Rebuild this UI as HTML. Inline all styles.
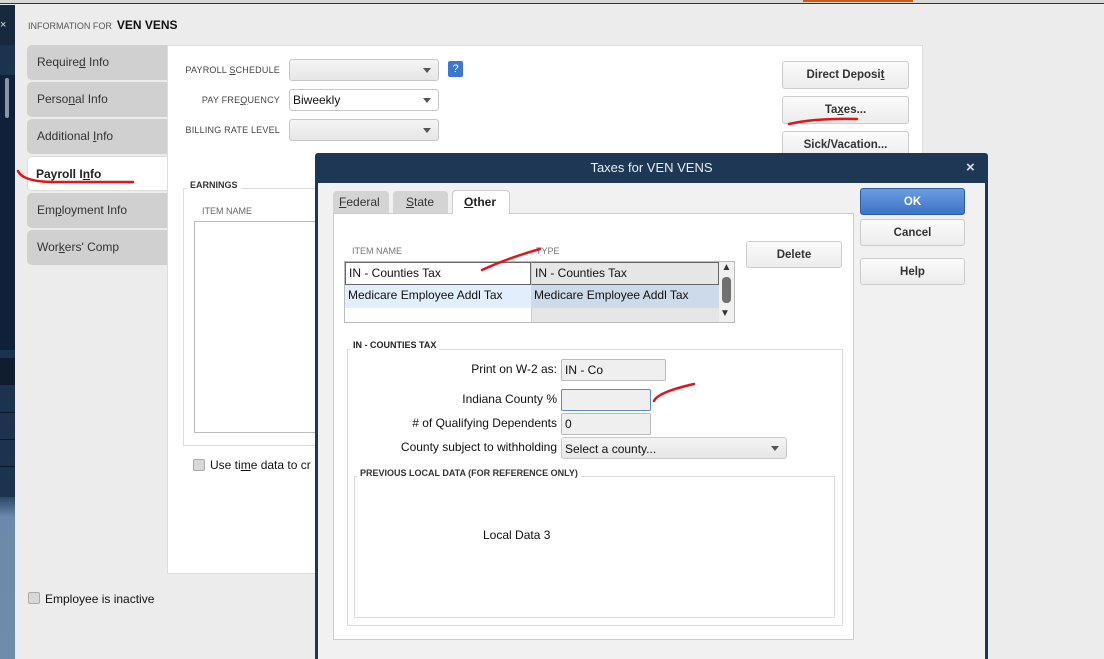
<!DOCTYPE html>
<html><head><style>
*{box-sizing:border-box;margin:0;padding:0}
body{width:1104px;height:659px;overflow:hidden;background:#ececec;font-family:"Liberation Sans",Arial,sans-serif;font-size:12px;color:#111;position:relative}
.a{position:absolute}
.tab{position:absolute;left:27px;width:140px;height:35px;background:#d0d0d0;border-radius:5px 0 0 5px;padding:10px 0 0 10px;font-size:12px;color:#333}
.lbl{position:absolute;font-size:9px;color:#444;text-align:right;letter-spacing:.2px}
.dd{position:absolute;height:22px;border:1px solid #c8c8c8;border-radius:3px;background:linear-gradient(#f4f4f4,#e6e6e6);font-size:12px;padding:3px 3px}
.dd:after{content:"";position:absolute;right:7px;top:8px;border:4px solid transparent;border-top:5px solid #555}
.btn{position:absolute;border:1px solid #ccc;border-radius:3px;background:linear-gradient(#fbfbfb,#ececec);text-align:center;font-weight:bold;font-size:11.5px;color:#333;padding-top:7px}
.fld{position:absolute;height:22px;border:1px solid #bbb;border-radius:2px;background:#efefef;padding:3px 3px;font-size:12px}
.cb{position:absolute;width:12px;height:12px;border:1px solid #aaa;border-radius:2px;background:#d8d8d8}
u{text-decoration:underline}
</style></head><body>
<div class="a" style="left:0;top:0;width:1104px;height:4px;background:#d8d8d8;border-bottom:1px solid #333"></div>
<div class="a" style="left:803px;top:0;width:110px;height:2px;background:#c85a1a"></div>
<div class="a" style="left:0;top:5px;width:15px;height:654px;background:#1c3350"></div>
<div class="a" style="left:0;top:5px;width:15px;height:40px;background:#17293f;color:#ddd;font-size:11px;padding:14px 0 0 0">×</div>
<div class="a" style="left:0;top:75px;width:15px;height:275px;background:#10203a"></div>
<div class="a" style="left:5px;top:78px;width:4px;height:40px;background:#8a96a6;border-radius:2px"></div>
<div class="a" style="left:0;top:358px;width:15px;height:27px;background:#0f1d2e"></div>
<div class="a" style="left:0;top:412px;width:15px;height:1px;background:#0d1828"></div>
<div class="a" style="left:0;top:439px;width:15px;height:1px;background:#0d1828"></div>
<div class="a" style="left:0;top:466px;width:15px;height:1px;background:#0d1828"></div>
<div class="a" style="left:0;top:497px;width:15px;height:162px;background:linear-gradient(#2c4868,#6b89aa 20px,#6e8cab)"></div>

<div class="a" style="left:28px;top:18px;font-size:9px;color:#555">INFORMATION FOR &nbsp;<b style="font-size:12px;color:#111">VEN VENS</b></div>
<div class="a" style="left:167px;top:45px;width:756px;height:529px;background:#fff;border:1px solid #ddd"></div>
<div class="tab" style="top:45px">Require<u>d</u> Info</div>
<div class="tab" style="top:82px">Perso<u>n</u>al Info</div>
<div class="tab" style="top:119px">Additional <u>I</u>nfo</div>
<div class="tab" style="top:156px;background:#fff;border:1px solid #ddd;border-right:none;font-weight:bold;color:#222;padding-left:8px">Payroll I<u>n</u>fo</div>
<div class="tab" style="top:193px">Em<u>p</u>loyment Info</div>
<div class="tab" style="top:230px">Wor<u>k</u>ers' Comp</div>
<svg class="a" style="left:15px;top:165px" width="120" height="25"><path d="M3 6 Q8 17 40 17 L118 17" stroke="#e0161a" stroke-width="2.5" fill="none" stroke-linecap="round"/></svg>

<div class="lbl" style="left:170px;top:65px;width:110px">PAYROLL <u>S</u>CHEDULE</div>
<div class="lbl" style="left:170px;top:95px;width:110px">PAY FRE<u>Q</u>UENCY</div>
<div class="lbl" style="left:170px;top:125px;width:110px">BILLING RATE LEVEL</div>
<div class="dd" style="left:289px;top:59px;width:150px"></div>
<div class="dd" style="left:289px;top:89px;width:150px;background:#fff">Biweekly</div>
<div class="dd" style="left:289px;top:119px;width:150px"></div>
<div class="a" style="left:448px;top:61px;width:15px;height:16px;background:#3c78cf;border-radius:2px;color:#fff;font-size:11px;text-align:center;line-height:16px">?</div>

<div class="a" style="left:183px;top:188px;width:140px;height:258px;border:1px solid #ddd"></div>
<div class="a" style="left:187px;top:180px;background:#fff;padding:0 3px;font-size:9px;font-weight:bold;color:#333">EARNINGS</div>
<div class="a" style="left:202px;top:206px;font-size:9px;color:#666">ITEM NAME</div>
<div class="a" style="left:194px;top:221px;width:130px;height:212px;border:1px solid #bbb"></div>
<div class="cb" style="left:193px;top:459px"></div>
<div class="a" style="left:210px;top:458px;font-size:12px">Use ti<u>m</u>e data to cr</div>
<div class="cb" style="left:28px;top:592px"></div>
<div class="a" style="left:45px;top:592px;font-size:12px">Employee is inactive</div>

<div class="btn" style="left:782px;top:61px;width:127px;height:28px">Direct Deposi<u>t</u></div>
<div class="btn" style="left:782px;top:96px;width:127px;height:28px">Ta<u>x</u>es...</div>
<div class="btn" style="left:782px;top:131px;width:127px;height:28px">Sick/Vacation...</div>
<svg class="a" style="left:785px;top:112px" width="80" height="16"><path d="M4 12 Q30 6 72 7" stroke="#e0161a" stroke-width="2.5" fill="none" stroke-linecap="round"/></svg>

<div class="a" style="left:315px;top:153px;width:673px;height:506px;background:#1e3755;border-radius:3px 3px 0 0"></div>
<div class="a" style="left:315px;top:153px;width:673px;height:30px;color:#e8eef4;font-size:13px;text-align:center;line-height:30px">Taxes for VEN VENS</div>
<div class="a" style="left:966px;top:159px;color:#ddd;font-size:15px;font-weight:bold">×</div>
<div class="a" style="left:318px;top:183px;width:667px;height:476px;background:#f1f1f1"></div>
<div class="a" style="left:333px;top:213px;width:521px;height:427px;background:#fff;border:1px solid #ccc"></div>
<div class="a" style="left:333px;top:191px;width:56px;height:22px;background:#d4d4d4;border-radius:4px 4px 0 0;font-size:12px;padding:4px 0 0 6px;color:#333"><u>F</u>ederal</div>
<div class="a" style="left:393px;top:191px;width:55px;height:22px;background:#d4d4d4;border-radius:4px 4px 0 0;font-size:12px;padding:4px 0 0 13px;color:#333"><u>S</u>tate</div>
<div class="a" style="left:452px;top:190px;width:58px;height:24px;background:#fff;border:1px solid #ccc;border-bottom:none;border-radius:4px 4px 0 0;font-size:12px;font-weight:bold;padding:4px 0 0 11px;color:#222"><u>O</u>ther</div>
<div class="a" style="left:352px;top:246px;font-size:9px;color:#777">ITEM NAME</div>
<div class="a" style="left:536px;top:246px;font-size:9px;color:#777">TYPE</div>
<div class="a" style="left:344px;top:261px;width:391px;height:62px;border:1px solid #bbb;background:#fff"></div>
<div class="a" style="left:345px;top:262px;width:186px;height:23px;border:1px solid #666;background:#fff;font-size:12px;padding:3px 3px">IN - Counties Tax</div>
<div class="a" style="left:531px;top:262px;width:188px;height:23px;border:1px solid #666;border-left:1px solid #ccc;background:#e6e6e6;font-size:12px;padding:3px 3px">IN - Counties Tax</div>
<div class="a" style="left:345px;top:285px;width:186px;height:23px;background:#e2eefc;font-size:12px;padding:3px 3px">Medicare Employee Addl Tax</div>
<div class="a" style="left:531px;top:285px;width:188px;height:23px;background:#ccdaea;font-size:12px;padding:3px 3px">Medicare Employee Addl Tax</div>
<div class="a" style="left:531px;top:308px;width:188px;height:14px;background:#e6e6e6;border-left:1px solid #ccc"></div>
<div class="a" style="left:719px;top:262px;width:15px;height:60px;background:#f0f0f0;font-size:10px;text-align:center;color:#333">▲</div>
<div class="a" style="left:722px;top:277px;width:9px;height:26px;background:#707070;border-radius:4px"></div>
<div class="a" style="left:720px;top:308px;font-size:10px;color:#333">▼</div>
<svg class="a" style="left:478px;top:244px" width="70" height="30"><path d="M4 26 Q30 14 62 5" stroke="#e0161a" stroke-width="2.5" fill="none" stroke-linecap="round"/></svg>
<div class="btn" style="left:746px;top:241px;width:96px;height:27px">Delete</div>
<div class="btn" style="left:860px;top:188px;width:105px;height:27px;background:linear-gradient(#6a9ce0,#3e74c6);border-color:#2c5ca8;color:#fff">OK</div>
<div class="btn" style="left:860px;top:219px;width:105px;height:27px">Cancel</div>
<div class="btn" style="left:860px;top:258px;width:105px;height:27px">Help</div>

<div class="a" style="left:347px;top:349px;width:496px;height:277px;border:1px solid #ddd"></div>
<div class="a" style="left:350px;top:340px;background:#fff;padding:0 3px;font-size:9px;font-weight:bold;color:#222">IN - COUNTIES TAX</div>
<div class="a" style="left:360px;top:362px;width:197px;text-align:right;font-size:12px">Print on W-2 as:</div>
<div class="a" style="left:360px;top:392px;width:197px;text-align:right;font-size:12px">Indiana County %</div>
<div class="a" style="left:360px;top:416px;width:197px;text-align:right;font-size:12px"># of Qualifying Dependents</div>
<div class="a" style="left:360px;top:440px;width:197px;text-align:right;font-size:12px">County subject to withholding</div>
<div class="fld" style="left:561px;top:359px;width:105px">IN - Co</div>
<div class="fld" style="left:561px;top:389px;width:90px;border-color:#5a8ad0"></div>
<div class="fld" style="left:561px;top:413px;width:90px">0</div>
<div class="dd" style="left:561px;top:437px;width:226px;padding-top:4px">Select a county...</div>
<svg class="a" style="left:650px;top:380px" width="50" height="25"><path d="M4 21 Q8 12 44 4" stroke="#e0161a" stroke-width="2.5" fill="none" stroke-linecap="round"/></svg>
<div class="a" style="left:354px;top:476px;width:481px;height:142px;border:1px solid #ddd"></div>
<div class="a" style="left:357px;top:468px;background:#fff;padding:0 3px;font-size:9px;font-weight:bold;color:#333">PREVIOUS LOCAL DATA (FOR REFERENCE ONLY)</div>
<div class="a" style="left:483px;top:528px;font-size:12px">Local Data 3</div>
</body></html>
